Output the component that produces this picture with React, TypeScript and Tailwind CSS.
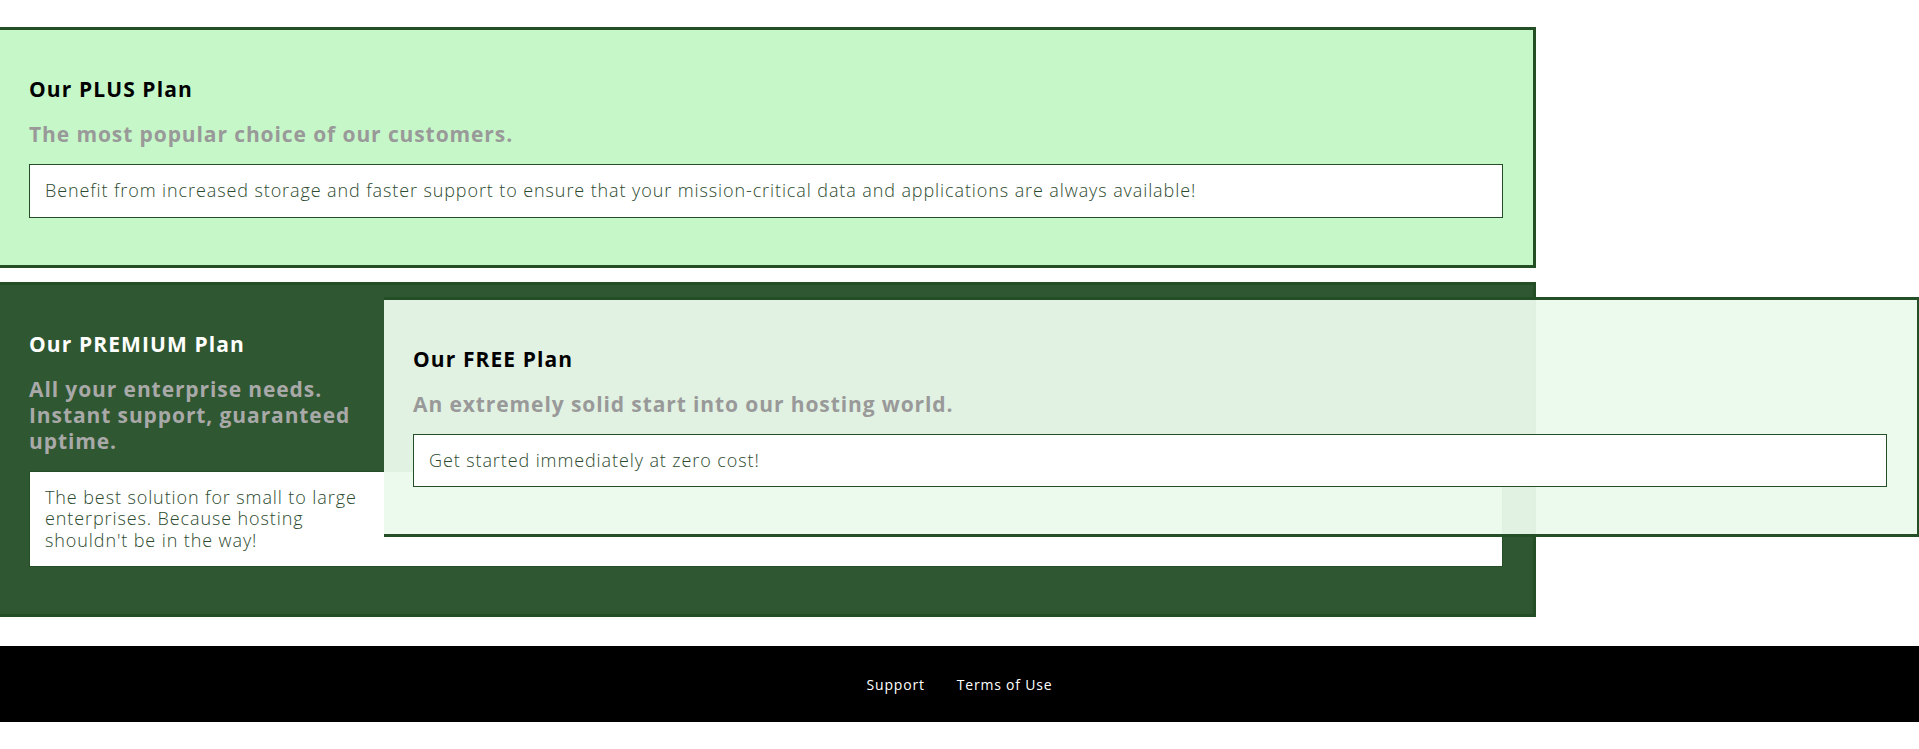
import React from "react";

const font = { fontFamily: '"Open Sans", "Liberation Sans", sans-serif' };

function Card({
  title,
  subtitle,
  desc,
  variant,
}: {
  title: string;
  subtitle: React.ReactNode;
  desc: React.ReactNode;
  variant: "plus" | "premium" | "free";
}) {
  const bg =
    variant === "plus"
      ? "bg-[#c6f7c8]"
      : variant === "premium"
      ? "bg-[#2f5731]"
      : "bg-[#ebfaec]/95";
  const titleColor = variant === "premium" ? "text-white" : "text-black";
  const subColor = variant === "premium" ? "text-[#a9a9a9]" : "text-[#999999]";
  return (
    <div
      className={`w-[1536px] border-y-[3px] border-r-[3px] border-[#244e25] ${bg} pl-[29px] pr-[30px] pt-[47px] pb-[47px]`}
    >
      <h2 className={`text-[21px] leading-[24px] font-bold tracking-[1.1px] ${titleColor}`}>{title}</h2>
      <p className={`mt-[20px] text-[21px] leading-[26px] font-bold tracking-[0.9px] ${subColor}`}>{subtitle}</p>
      <div className="mt-[17px] border border-[#244e25] bg-white px-[15px] py-[15px] text-[18px] leading-[21.6px] font-light tracking-[0.9px] text-[#2c4a2e]">
        {desc}
      </div>
    </div>
  );
}

export default function App() {
  return (
    <div className="min-h-[749px] bg-white pt-[27px]" style={font}>
      <Card
        variant="plus"
        title="Our PLUS Plan"
        subtitle="The most popular choice of our customers."
        desc="Benefit from increased storage and faster support to ensure that your mission-critical data and applications are always available!"
      />
      <div className="relative mt-[14px]">
        <Card
          variant="premium"
          title="Our PREMIUM Plan"
          subtitle={
            <>
              All your enterprise needs.
              <br />
              Instant support, guaranteed
              <br />
              uptime.
            </>
          }
          desc={
            <>
              The best solution for small to large
              <br />
              enterprises. Because hosting
              <br />
              shouldn't be in the way!
            </>
          }
        />
        <div className="absolute left-[384px] top-[15px] w-[1535px]">
          <Card
            variant="free"
            title="Our FREE Plan"
            subtitle="An extremely solid start into our hosting world."
            desc="Get started immediately at zero cost!"
          />
        </div>
      </div>
      <footer className="mt-[29px] flex h-[76px] items-center justify-center gap-8 bg-black text-[14px] tracking-[0.8px] text-white">
        <a href="#" className="text-white">Support</a>
        <a href="#" className="text-white">Terms of Use</a>
      </footer>
    </div>
  );
}
